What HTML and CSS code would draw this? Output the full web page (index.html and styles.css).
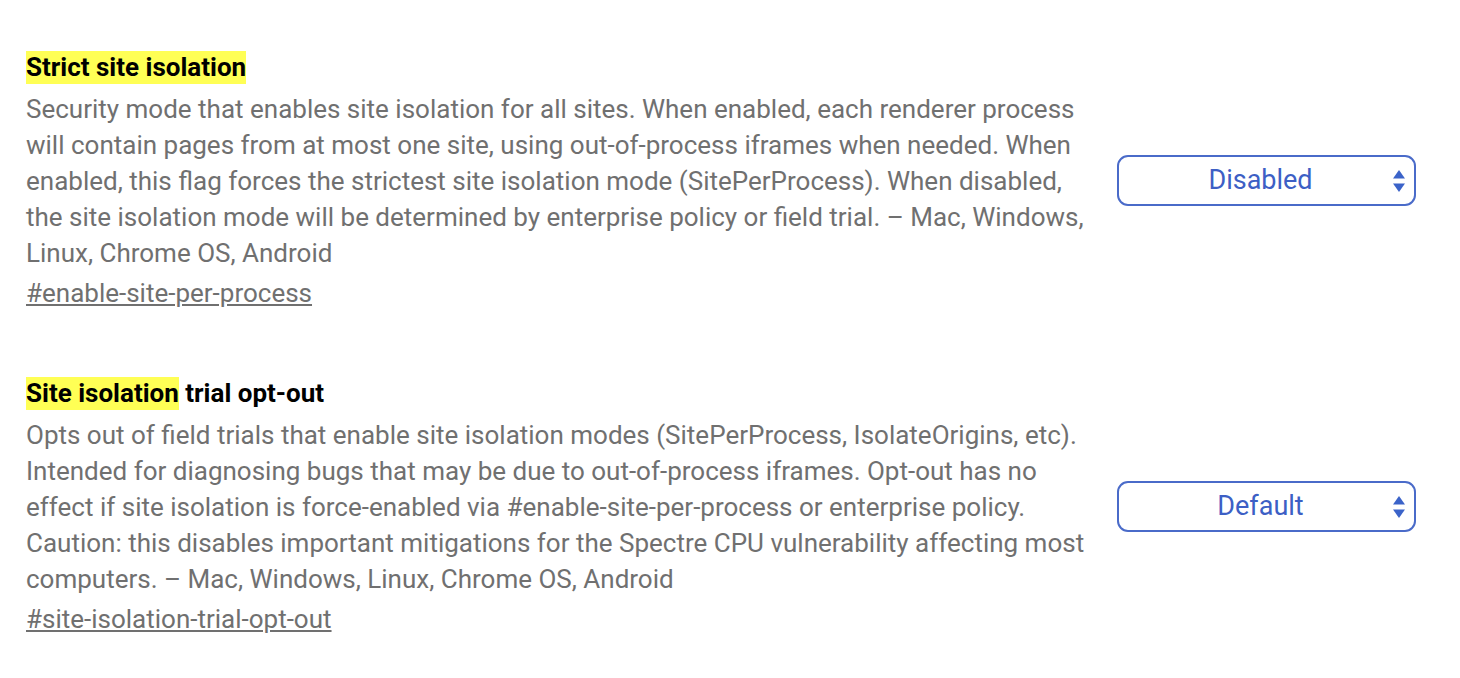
FILE: index.html
```html
<!DOCTYPE html>
<html>
<head>
<meta charset="utf-8">
<link rel="stylesheet" href="styles.css">
</head>
<body>
<div class="flags">
  <div class="flag">
    <div class="info">
      <h3 class="title"><span class="hl">Strict site isolation</span></h3>
      <p class="desc">Security mode that enables site isolation for all sites. When enabled, each renderer process will contain pages from at most one site, using out-of-process iframes when needed. When enabled, this flag forces the strictest site isolation mode (SitePerProcess). When disabled, the site isolation mode will be determined by enterprise policy or field trial. – Mac, Windows, Linux, Chrome OS, Android</p>
      <a class="link" href="#enable-site-per-process">#enable-site-per-process</a>
    </div>
    <div class="control">
      <div class="select"><span class="select-label">Disabled</span>
        <svg class="arrows" width="12" height="22" viewBox="0 0 12 22"><path d="M6 0 L12 8.5 L0 8.5 Z" fill="#3b63c9"/><path d="M0 13.5 L12 13.5 L6 22 Z" fill="#3b63c9"/></svg>
      </div>
    </div>
  </div>
  <div class="flag">
    <div class="info">
      <h3 class="title"><span class="hl">Site isolation</span> trial opt-out</h3>
      <p class="desc">Opts out of field trials that enable site isolation modes (SitePerProcess, IsolateOrigins, etc). Intended for diagnosing bugs that may be due to out-of-process iframes. Opt-out has no effect if site isolation is force-enabled via #enable-site-per-process or enterprise policy. Caution: this disables important mitigations for the Spectre CPU vulnerability affecting most computers. – Mac, Windows, Linux, Chrome OS, Android</p>
      <a class="link" href="#site-isolation-trial-opt-out">#site-isolation-trial-opt-out</a>
    </div>
    <div class="control">
      <div class="select"><span class="select-label">Default</span>
        <svg class="arrows" width="12" height="22" viewBox="0 0 12 22"><path d="M6 0 L12 8.5 L0 8.5 Z" fill="#3b63c9"/><path d="M0 13.5 L12 13.5 L6 22 Z" fill="#3b63c9"/></svg>
      </div>
    </div>
  </div>
</div>
</body>
</html>
```
FILE: styles.css
```css
html, body {
  margin: 0;
  padding: 0;
  background: #ffffff;
}
body {
  font-family: Roboto, "Liberation Sans", sans-serif;
  font-size: 26px;
}
.flags {
  padding: 49px 0 0 26px;
  display: flex;
  flex-direction: column;
  gap: 64px;
}
.flag {
  display: flex;
  align-items: center;
}
.info {
  width: 1066px;
}
.title {
  margin: 0;
  font-size: 26px;
  font-weight: 700;
  line-height: 36px;
  color: #000;
}
.hl {
  background: #ffff55;
  padding: 1px 0 2px;
}
.desc {
  margin: 6px 0 0;
  line-height: 36px;
  color: #707070;
}
.link {
  display: block;
  margin-top: 4px;
  line-height: 36px;
  color: #707070;
  text-decoration: underline;
}
.control {
  margin-left: 25px;
}
.select {
  box-sizing: border-box;
  width: 299px;
  height: 51px;
  border: 2px solid #4a6bc9;
  border-radius: 11px;
  display: flex;
  align-items: center;
  justify-content: center;
  padding-right: 12px;
  position: relative;
}
.select-label {
  color: #3d5fc5;
  font-size: 27px;
}
.arrows {
  position: absolute;
  right: 9px;
  top: 13px;
}
```
